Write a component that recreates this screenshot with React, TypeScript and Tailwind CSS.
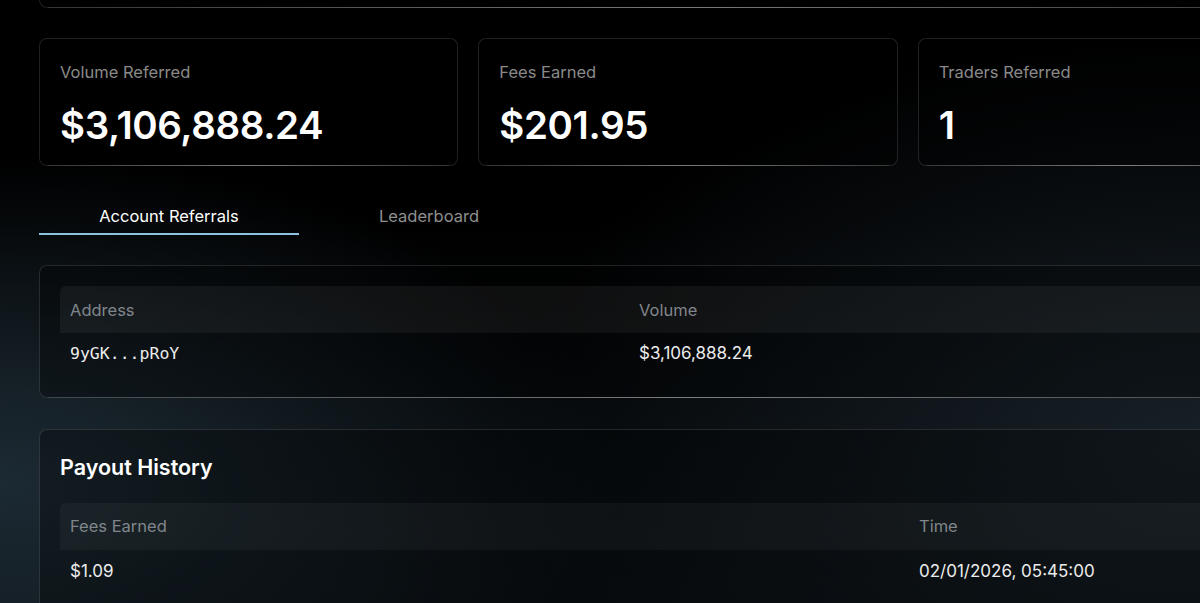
import React from "react";

type Stat = { label: string; value: string };

const stats: Stat[] = [
  { label: "Volume Referred", value: "$3,106,888.24" },
  { label: "Fees Earned", value: "$201.95" },
  { label: "Traders Referred", value: "1" },
];

// thin highlight that runs along the bottom edge of every card
const Shine = () => (
  <div className="pointer-events-none absolute -bottom-px left-2 right-2 h-px bg-gradient-to-r from-white/10 via-white/40 to-white/10" />
);

const Card = ({ className = "", children }: { className?: string; children: React.ReactNode }) => (
  <div className={`relative rounded-lg border border-white/[0.12] bg-black/30 ${className}`}>
    {children}
    <Shine />
  </div>
);

const StatCard = ({ label, value }: Stat) => (
  <Card className="bg-black px-5 pt-[22px] pb-[19px]">
    <div className="text-[16.5px] leading-[22px] text-[#8a8a8a]">{label}</div>
    <div className="mt-[21px] text-[38.5px] leading-[42px] font-semibold tracking-[-0.01em] text-white">{value}</div>
  </Card>
);

export default function App() {
  return (
    <div
      className="min-h-[603px] w-full overflow-hidden bg-black bg-[radial-gradient(ellipse_620px_330px_at_0%_78%,#1c2a33_0%,transparent_100%),radial-gradient(ellipse_700px_420px_at_100%_72%,#172027_0%,transparent_100%),linear-gradient(to_bottom,#000_35%,#0a0f13_100%)] text-white"
      style={{ fontFamily: "Inter, 'Noto Sans', sans-serif" }}
    >
      <div className="w-[1298px] ml-[39px]">
        {/* tail of the card above */}
        <div className="relative h-[8px] rounded-b-lg border-x border-b border-white/[0.12]">
          <Shine />
        </div>

        <div className="mt-[30px] grid grid-cols-3 gap-5">
          {stats.map((s) => (
            <StatCard key={s.label} {...s} />
          ))}
        </div>

        {/* tabs */}
        <div className="mt-[31px] flex">
          <button className="h-[38px] w-[260px] border-b-2 border-[#8cc4df] pt-[2px] text-[16.5px] text-white">
            Account Referrals
          </button>
          <button className="h-[38px] w-[260px] border-b-2 border-transparent pt-[2px] text-[16.5px] text-[#8f8f8f]">
            Leaderboard
          </button>
        </div>

        {/* referred accounts */}
        <Card className="mt-[30px] px-5 pt-5 pb-6">
          <div className="flex h-[47px] items-center rounded-t-md bg-white/[0.05] pt-[2px] text-[16.5px] text-[#80868b]">
            <div className="w-[569px] px-2.5">Address</div>
            <div className="px-2.5">Volume</div>
          </div>
          <div className="flex h-10 items-center pt-[2px] text-[17px] text-[#ececec]">
            <div className="w-[569px] px-2.5" style={{ fontFamily: "'DejaVu Sans Mono', monospace", fontSize: 16.5 }}>
              9yGK...pRoY
            </div>
            <div className="px-2.5">$3,106,888.24</div>
          </div>
        </Card>

        {/* payouts */}
        <Card className="mt-[31px] px-5 pt-[22px] pb-6">
          <h2 className="text-[21.5px] leading-[30px] font-semibold text-white">Payout History</h2>
          <div className="mt-[21px] flex h-[47px] items-center rounded-t-md bg-white/[0.04] text-[16.5px] text-[#80868b]">
            <div className="w-[849px] px-2.5">Fees Earned</div>
            <div className="px-2.5">Time</div>
          </div>
          <div className="flex h-11 items-center text-[17px] text-[#ececec]">
            <div className="w-[849px] px-2.5">$1.09</div>
            <div className="px-2.5">02/01/2026, 05:45:00</div>
          </div>
        </Card>
      </div>
    </div>
  );
}
